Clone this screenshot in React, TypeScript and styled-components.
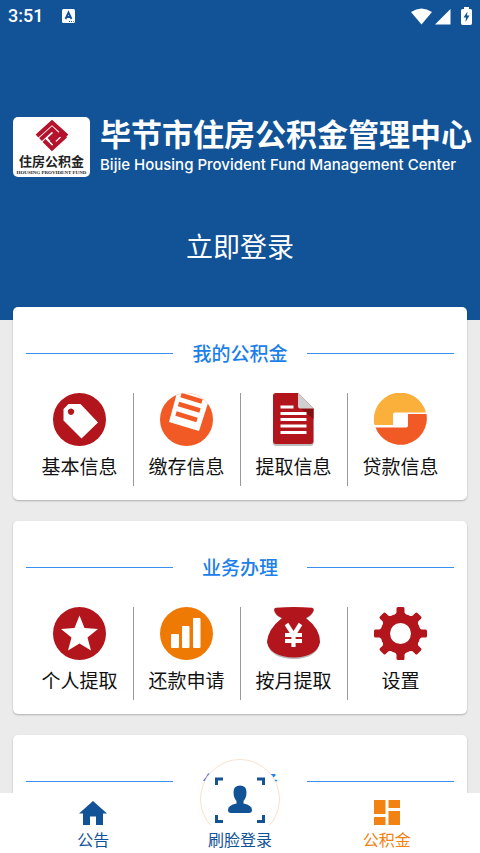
import React from "react";
import styled, { createGlobalStyle } from "styled-components";

const BLUE = "#115396";
const RED = "#b2151b";
const ORANGE = "#f28211";

const GlobalStyle = createGlobalStyle`
  * { box-sizing: border-box; }
  body {
    margin: 0;
    background: #ebebeb;
    font-family: "Noto Sans CJK SC", "Noto Sans", sans-serif;
    color: #111;
  }
  button { font: inherit; color: inherit; background: none; border: 0; padding: 0; cursor: pointer; }
  a { color: inherit; text-decoration: none; }
  svg { display: block; flex: none; }
`;

const Page = styled.div`
  height: 100vh;
  display: flex;
  flex-direction: column;
  overflow: hidden;
`;

const Header = styled.header`
  flex: none;
  background: ${BLUE};
  color: #fff;
  padding-bottom: 54px;
`;

const StatusBar = styled.div`
  display: flex;
  align-items: center;
  height: 32px;
  padding: 0 8px;
  font: 500 18px/32px Roboto, sans-serif;
`;

const StatusIcons = styled.div`
  display: flex;
  align-items: center;
  gap: 3px;
  margin-left: auto;
`;

const InputBadge = styled.svg`
  margin-left: 19px;
`;

const Brand = styled.div`
  display: flex;
  align-items: flex-start;
  gap: 10px;
  padding: 85px 8px 0 13px;
`;

const LogoBox = styled.div`
  flex: none;
  width: 77px;
  height: 60px;
  border-radius: 5px;
  background: #fff;
  color: #222;
  display: flex;
  flex-direction: column;
  align-items: center;
  padding-top: 1px;
`;

const LogoName = styled.div`
  font-size: 13px;
  font-weight: 700;
  line-height: 18px;
  white-space: nowrap;
`;

const LogoLatin = styled.div`
  font: 700 5px/5px "Liberation Serif", serif;
  white-space: nowrap;
`;

const BrandText = styled.div`
  flex: 1;
  min-width: 0;
  white-space: nowrap;
`;

const BrandName = styled.h1`
  margin: 0;
  font-size: 31px;
  font-weight: 700;
  line-height: 32px;
`;

const BrandLatin = styled.div`
  margin-top: 3px;
  font: 500 15px/26px Inter, sans-serif;
`;

const LoginButton = styled.button`
  && {
    display: block;
    margin: 48px auto 0;
    font-size: 27px;
    line-height: 40px;
  }
`;

const Main = styled.main`
  flex: 1;
  min-height: 0;
  display: flex;
  flex-direction: column;
  gap: 21px;
  margin-top: -13px;
  padding: 0 13px;
`;

const Card = styled.section`
  flex: none;
  border-radius: 5px;
  background: #fff;
  box-shadow: 0 1px 2px rgba(0, 0, 0, 0.25);
  padding: 32px 13px 14px;
`;

const CardTitle = styled.h2`
  display: flex;
  align-items: center;
  justify-content: space-between;
  margin: 0;
  font-size: 19px;
  font-weight: 500;
  line-height: 28px;
  color: #1c80ea;
  &::before,
  &::after {
    content: "";
    width: 147px;
    height: 1px;
    background: #3a90ee;
  }
`;

const Grid = styled.div`
  display: grid;
  grid-template-columns: repeat(4, 1fr);
  margin-top: 26px;
`;

const Item = styled.button`
  && {
    display: flex;
    flex-direction: column;
    align-items: center;
    height: 93px;
    font-size: 19px;
    line-height: 28px;
    white-space: nowrap;
  }
  && + && {
    border-left: 1px solid #999;
    padding-right: 1px;
  }
  svg {
    margin-bottom: 6px;
  }
`;

const Nav = styled.nav`
  flex: none;
  position: relative;
  display: grid;
  grid-template-columns: repeat(3, 1fr);
  height: 60px;
  padding: 0 20px;
  background: #fff;
`;

const NavLink = styled.a<{ $active?: boolean }>`
  display: flex;
  flex-direction: column;
  align-items: center;
  justify-content: flex-end;
  gap: 2px;
  height: 60px;
  padding-bottom: 2px;
  font-size: 16px;
  line-height: 24px;
  color: ${(p) => (p.$active ? ORANGE : BLUE)};
`;

const circle = (fill: string) => <circle cx="26.5" cy="26.5" r="26.5" fill={fill} />;

const icons: Record<string, React.ReactNode> = {
  tag: (
    <>
      {circle(RED)}
      <path fillRule="evenodd" fill="#fff" d="M15.500 11H27.500L45 29.500L28.500 45.500L10.500 27.500V16ZM18 15.500a3.200 3.200 0 1 0 .01 0Z" />
    </>
  ),
  sheet: (
    <>
      <clipPath id="sheetClip"><circle cx="26.5" cy="26.5" r="26.5" /></clipPath>
      {circle("#f15a24")}
      <g clipPath="url(#sheetClip)">
        <path d="M18-4 50 4 39 38 9 29Z" fill="#fff" />
        <path d="M21 2 42 8.500M18.500 11 40 17.500M16 20.500 37 27" stroke="#f15a24" strokeWidth="4.500" />
      </g>
    </>
  ),
  document: (
    <>
      <path d="M6 3a3 3 0 0 1 3-3H31L46.500 15.500V49a3 3 0 0 1-3 3H9a3 3 0 0 1-3-3Z" fill="#bdbdbd" transform="translate(0 1)" />
      <path d="M6 3a3 3 0 0 1 3-3H31L46.500 15.500V48a3 3 0 0 1-3 3H9a3 3 0 0 1-3-3Z" fill={RED} />
      <path d="M34 15.500H46.500V26Z" fill="#82100f" />
      <path d="M31 0 46.500 15.500H33a2 2 0 0 1-2-2Z" fill="#d0d0d0" />
      <path d="M13.500 14H26.500M13.500 20.500H39.500M13.500 26.500H39.500M13.500 33H39.500M13.500 39.500H39.500" stroke="#fff" strokeWidth="3" />
    </>
  ),
  loan: (
    <>
      <path d="M.5 32A26.500 26.500 0 0 1 52 19.500H21a2 2 0 0 0-2 2V32Z" fill="#fbb03b" />
      <path d="M52.500 21A26.500 26.500 0 0 1 1.500 34.500H32a2 2 0 0 0 2-2V21Z" fill="#f15a24" />
    </>
  ),
  star: (
    <>
      {circle(RED)}
      <path d="M26.500 8.500 31.500 21 45 22 34.500 30.500 38 43.500 26.500 36.500 15 43.500 18.500 30.500 8 22 21.500 21Z" fill="#fff" />
    </>
  ),
  bars: (
    <>
      {circle("#ee7a04")}
      <g fill="#fff">
        <rect x="11" y="27" width="8" height="14" rx="1" />
        <rect x="22" y="19" width="7.500" height="22" rx="1" />
        <rect x="33" y="11" width="7.500" height="30" rx="1" />
      </g>
    </>
  ),
  bag: (
    <>
      <path d="M8 1.500Q27-.5 45 1.500Q47 3 46 5Q44 9 39 11Q53 22 53 35Q50 51 27 51.500Q3 51 0 35Q1 22 15 11Q9 9 7 4Q6 2 8 1.500Z" fill="#bbb" transform="translate(0 .5)" />
      <path d="M9 .8Q27-.8 45 .8Q47.500 1.500 46.500 4Q44 9 39 11Q53 22 53 35Q50 50 27 50.500Q3 50 0 35Q1 22 15 11Q9 9 7.500 4Q6.500 1 9 .8Z" fill={RED} />
      <path d="M19.500 17 26.500 28 33.500 17M18 28H35M18 34H35M26.500 27V40" fill="none" stroke="#fff" strokeWidth="4.200" />
    </>
  ),
  gear: (
    <>
      <g fill={RED}>
        <circle cx="26.5" cy="26.5" r="20" />
        {[0, 45, 90, 135].map((a) => (
          <path key={a} transform={`rotate(${a} 26.5 26.5)`} d="M22.500 1.500Q22.500 0 24 0H29Q30.500 0 30.500 1.500V5.500L33 9V44L30.500 47.500V51.500Q30.500 53 29 53H24Q22.500 53 22.500 51.500V47.500L20 44V9L22.500 5.500Z" />
        ))}
      </g>
      <circle cx="26.5" cy="26.5" r="10.5" fill="#fff" />
    </>
  ),
};

const sections = [
  { title: "我的公积金", items: [["tag", "基本信息"], ["sheet", "缴存信息"], ["document", "提取信息"], ["loan", "贷款信息"]] },
  { title: "业务办理", items: [["star", "个人提取"], ["bars", "还款申请"], ["bag", "按月提取"], ["gear", "设置"]] },
  { title: "公共服务", items: [] },
];

export default function App() {
  return (
    <Page>
      <GlobalStyle />
      <Header>
        <StatusBar>
          <span>3:51</span>
          <InputBadge width="13" height="14" viewBox="0 0 13 14" aria-hidden="true">
            <rect width="13" height="14" rx="1.500" fill="#fff" />
            <path d="M3.500 10 6.500 3.500 9.500 10M4.500 8H8.500" fill="none" stroke={BLUE} strokeWidth="1.800" />
            <path d="M7 12.500H11.500" stroke={BLUE} strokeDasharray="1 1" />
          </InputBadge>
          <StatusIcons>
            <svg width="21" height="17" viewBox="0 0 21 17" aria-hidden="true">
              <path d="M0 4Q10.500-3 21 4L10.500 16.500Z" fill="#fff" />
            </svg>
            <svg width="16" height="17" viewBox="0 0 16 17" aria-hidden="true">
              <path d="M15.500 1V16.500H0Z" fill="#fff" />
            </svg>
            <svg width="18" height="18" viewBox="0 0 18 18" aria-hidden="true">
              <path d="M10 0H15V2H16.500Q18 2 18 3.500V16Q18 18 16.500 18H8.500Q7 18 7 16V3.500Q7 2 8.500 2H10Z" fill="#fff" />
              <path d="M13.500 4.500 9.500 10.500H12L11.500 15 15.500 8.500H13Z" fill={BLUE} />
            </svg>
          </StatusIcons>
        </StatusBar>
        <Brand>
          <LogoBox>
            <svg width="34" height="34" viewBox="0 0 34 34" aria-hidden="true">
              <g fill="none" stroke="#b5122b" strokeWidth="4">
                <path d="M2 18 17 4.500 32 18" />
                <path d="M5.500 21.500 17 11 21 15 14 21.500" />
                <path d="M9 22.500 17 30.500 29 19.500 25 16 17.500 23 20 25.500" />
              </g>
            </svg>
            <LogoName>住房公积金</LogoName>
            <LogoLatin>HOUSING PROVIDENT FUND</LogoLatin>
          </LogoBox>
          <BrandText>
            <BrandName>毕节市住房公积金管理中心</BrandName>
            <BrandLatin>Bijie Housing Provident Fund Management Center</BrandLatin>
          </BrandText>
        </Brand>
        <LoginButton>立即登录</LoginButton>
      </Header>
      <Main>
        {sections.map((s) => (
          <Card key={s.title}>
            <CardTitle>{s.title}</CardTitle>
            <Grid>
              {s.items.map(([icon, label]) => (
                <Item key={label}>
                  <svg width="53" height="53" viewBox="0 0 53 53" aria-hidden="true">{icons[icon]}</svg>
                  {label}
                </Item>
              ))}
            </Grid>
          </Card>
        ))}
      </Main>
      <Nav>
        <NavLink href="#notice">
          <svg width="28" height="24" viewBox="0 0 28 24" aria-hidden="true">
            <path d="M14 0 28 12.500H24V24H17V15.500H11V24H4V12.500H0Z" fill={BLUE} />
          </svg>
          公告
        </NavLink>
        <NavLink href="#face">
          <svg width="80" height="66" viewBox="0 0 80 66" aria-hidden="true">
            <circle cx="40" cy="40" r="39.500" fill="#fff" stroke="#fbe0cb" />
            <path d="M16.500 26V20H23M57 20H63.500V26M16.500 56V62.500H23M57 62.500H63.500V56" fill="none" stroke={BLUE} strokeWidth="3" />
            <path d="M40 26.500Q46.500 26.500 46.500 33Q46.500 39 43.500 42V44.500Q52 46 52 51Q52 54 49 54H31Q28 54 28 51Q28 46 36.500 44.500V42Q33.500 39 33.500 33Q33.500 26.500 40 26.500Z" fill={BLUE} />
          </svg>
          刷脸登录
        </NavLink>
        <NavLink href="#fund" $active>
          <svg width="26" height="25" viewBox="0 0 26 25" aria-hidden="true">
            <path d="M0 0H11.500V14H0ZM14.500 0H26V8H14.500ZM0 17H11.500V25H0ZM14.500 11H26V25H14.500Z" fill={ORANGE} />
          </svg>
          公积金
        </NavLink>
      </Nav>
    </Page>
  );
}
